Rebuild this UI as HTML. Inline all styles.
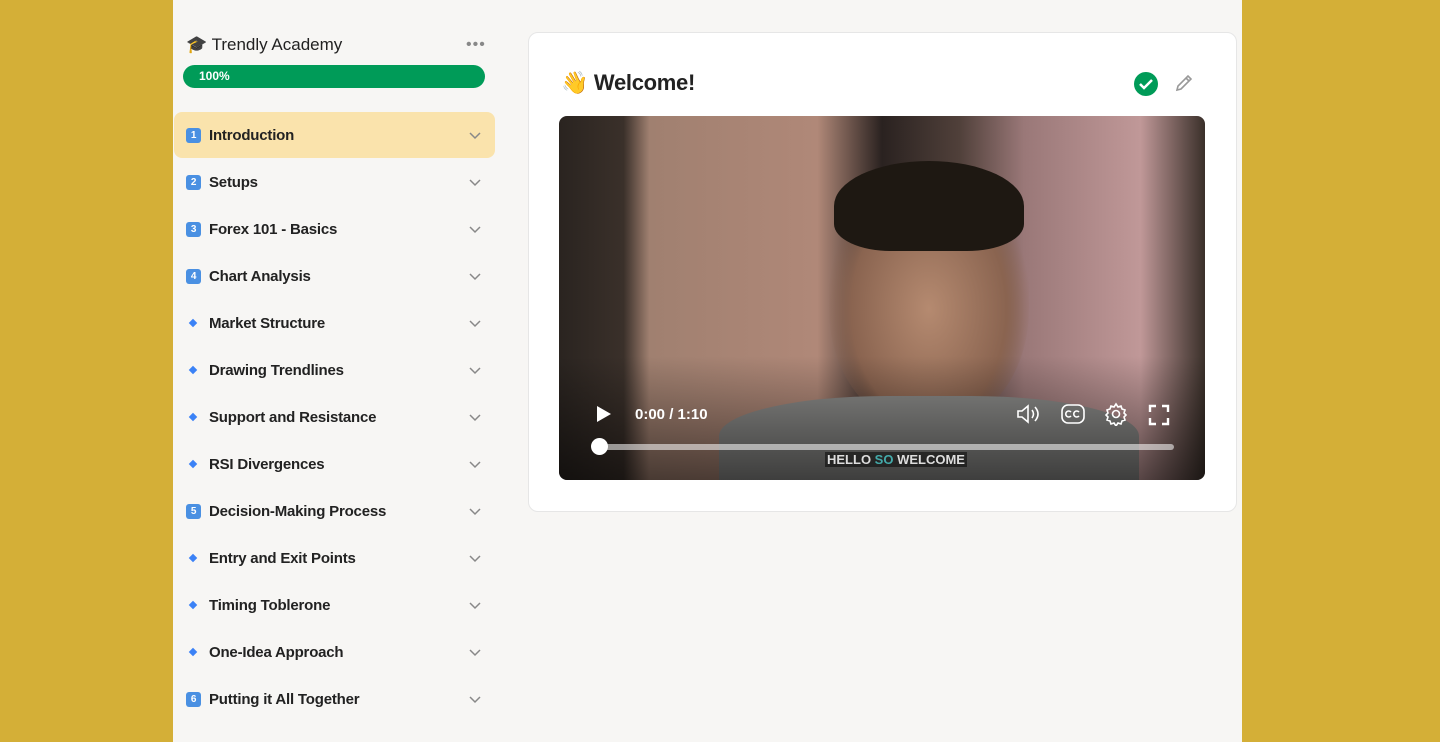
<!DOCTYPE html><html><head><style>
body{margin:0;width:1440px;height:742px;background:#d4af37;font-family:"Liberation Sans",sans-serif;position:relative;overflow:hidden}
.app{position:absolute;left:173px;top:0;width:1069px;height:742px;background:#f7f6f4}
.title{position:absolute;left:13px;top:35px;font-size:17px;color:#222;}
.dots{position:absolute;left:293px;top:36px;color:#888;font-size:16px;letter-spacing:1px}
.bar{position:absolute;left:10px;top:65px;width:302px;height:23px;background:#009b58;border-radius:12px;color:#fff;font-size:12px;font-weight:bold;line-height:22px;text-indent:16px}
.item{position:absolute;left:1px;width:321px;height:46px;border-radius:8px;font-size:15px;font-weight:bold;color:#222;line-height:48px;letter-spacing:-0.2px}
.item .ic{position:absolute;left:12px;top:16px;width:15px;height:15px;border-radius:3px;background:#4a90e2;color:#fff;font-size:10px;line-height:15px;text-align:center}
.item .dm{position:absolute;left:16px;top:20px;width:6px;height:6px;background:#3b82f6;transform:rotate(45deg)}
.item .t{position:absolute;left:35px}
.item svg{position:absolute;left:294px;top:18px}
.card{position:absolute;left:355px;top:32px;width:707px;height:478px;background:#fff;border:1px solid #e6e6e6;border-radius:10px}
.video{position:absolute;left:30px;top:83px;width:646px;height:364px;border-radius:8px;overflow:hidden;background:linear-gradient(90deg,#2a2420 0%,#3a302a 10%,#a08070 14%,#b08878 40%,#2a2220 50%,#50403a 62%,#9a7878 72%,#c09898 90%,#3a302a 100%)}
</style></head><body>
<div class="app">
<div class="title">🎓 Trendly Academy</div>
<div class="dots">•••</div>
<div class="bar">100%</div>
<div class="item" style="top:112px;background:#fae3ac"><span class="ic">1</span><span class="t">Introduction</span><svg width="14" height="10"><path d="M2 3l5 5 5-5" stroke="#888" stroke-width="1.5" fill="none"/></svg></div>
<div class="item" style="top:159px"><span class="ic">2</span><span class="t">Setups</span><svg width="14" height="10"><path d="M2 3l5 5 5-5" stroke="#888" stroke-width="1.5" fill="none"/></svg></div>
<div class="item" style="top:206px"><span class="ic">3</span><span class="t">Forex 101 - Basics</span><svg width="14" height="10"><path d="M2 3l5 5 5-5" stroke="#888" stroke-width="1.5" fill="none"/></svg></div>
<div class="item" style="top:253px"><span class="ic">4</span><span class="t">Chart Analysis</span><svg width="14" height="10"><path d="M2 3l5 5 5-5" stroke="#888" stroke-width="1.5" fill="none"/></svg></div>
<div class="item" style="top:300px"><span class="dm"></span><span class="t">Market Structure</span><svg width="14" height="10"><path d="M2 3l5 5 5-5" stroke="#888" stroke-width="1.5" fill="none"/></svg></div>
<div class="item" style="top:347px"><span class="dm"></span><span class="t">Drawing Trendlines</span><svg width="14" height="10"><path d="M2 3l5 5 5-5" stroke="#888" stroke-width="1.5" fill="none"/></svg></div>
<div class="item" style="top:394px"><span class="dm"></span><span class="t">Support and Resistance</span><svg width="14" height="10"><path d="M2 3l5 5 5-5" stroke="#888" stroke-width="1.5" fill="none"/></svg></div>
<div class="item" style="top:441px"><span class="dm"></span><span class="t">RSI Divergences</span><svg width="14" height="10"><path d="M2 3l5 5 5-5" stroke="#888" stroke-width="1.5" fill="none"/></svg></div>
<div class="item" style="top:488px"><span class="ic">5</span><span class="t">Decision-Making Process</span><svg width="14" height="10"><path d="M2 3l5 5 5-5" stroke="#888" stroke-width="1.5" fill="none"/></svg></div>
<div class="item" style="top:535px"><span class="dm"></span><span class="t">Entry and Exit Points</span><svg width="14" height="10"><path d="M2 3l5 5 5-5" stroke="#888" stroke-width="1.5" fill="none"/></svg></div>
<div class="item" style="top:582px"><span class="dm"></span><span class="t">Timing Toblerone</span><svg width="14" height="10"><path d="M2 3l5 5 5-5" stroke="#888" stroke-width="1.5" fill="none"/></svg></div>
<div class="item" style="top:629px"><span class="dm"></span><span class="t">One-Idea Approach</span><svg width="14" height="10"><path d="M2 3l5 5 5-5" stroke="#888" stroke-width="1.5" fill="none"/></svg></div>
<div class="item" style="top:676px"><span class="ic">6</span><span class="t">Putting it All Together</span><svg width="14" height="10"><path d="M2 3l5 5 5-5" stroke="#888" stroke-width="1.5" fill="none"/></svg></div>
<div class="card">
<div style="position:absolute;left:32px;top:37px;font-size:22px;font-weight:bold;color:#222;letter-spacing:-0.3px">👋 Welcome!</div>
<svg style="position:absolute;left:604px;top:38px" width="26" height="26"><circle cx="13" cy="13" r="12" fill="#009b58"/><path d="M7 13l4 4 8-8" stroke="#fff" stroke-width="2.5" fill="none"/></svg>
<svg style="position:absolute;left:644px;top:39px" width="22" height="22"><path d="M4 18l1-4 10-10 3 3-10 10z M13 6l3 3" stroke="#999" stroke-width="1.6" fill="none"/></svg>
<div class="video">
<div style="position:absolute;left:270px;top:50px;width:200px;height:260px;border-radius:45%;background:radial-gradient(ellipse at 50% 55%,#b58a70 0%,#8a6450 55%,transparent 72%)"></div>
<div style="position:absolute;left:275px;top:45px;width:190px;height:90px;border-radius:50% 50% 30% 30%;background:#1e1812"></div>
<div style="position:absolute;left:160px;top:280px;width:420px;height:100px;border-radius:40% 40% 0 0;background:#8a8a88"></div>
<div style="position:absolute;left:0;top:240px;width:646px;height:124px;background:linear-gradient(transparent,rgba(0,0,0,.55))"></div>
<svg style="position:absolute;left:37px;top:289px" width="16" height="18"><path d="M1 1l14 8-14 8z" fill="#fff"/></svg>
<div style="position:absolute;left:76px;top:290px;color:#fff;font-size:15px;font-weight:bold">0:00 / 1:10</div>
<svg style="position:absolute;left:457px;top:287px" width="26" height="22" fill="none" stroke="#fff" stroke-width="1.6"><path d="M2 8h4l6-5v16l-6-5H2z M16 7q3 4 0 8 M19 4q6 7 0 14"/></svg>
<svg style="position:absolute;left:501px;top:287px" width="26" height="22" fill="none" stroke="#fff" stroke-width="1.6"><rect x="2" y="2" width="22" height="18" rx="6"/><path d="M11 9a3 3 0 1 0 0 4 M19 9a3 3 0 1 0 0 4"/></svg>
<svg style="position:absolute;left:545px;top:286px" width="24" height="24" fill="none" stroke="#fff" stroke-width="1.6"><circle cx="12" cy="12" r="3.5"/><path d="M12 2l2 3 3-1 1 3 3 1-1 3 2 2-2 2 1 3-3 1-1 3-3-1-2 3-2-3-3 1-1-3-3-1 1-3-2-2 2-2-1-3 3-1 1-3 3 1z"/></svg>
<svg style="position:absolute;left:589px;top:288px" width="22" height="22" fill="none" stroke="#fff" stroke-width="2.4"><path d="M2 8V2h6 M14 2h6v6 M20 14v6h-6 M8 20H2v-6"/></svg>
<div style="position:absolute;left:38px;top:328px;width:577px;height:6px;border-radius:3px;background:rgba(255,255,255,.55)"></div>
<div style="position:absolute;left:32px;top:322px;width:17px;height:17px;border-radius:50%;background:#fff"></div>
<div style="position:absolute;left:266px;top:336px;font-size:13px;font-weight:bold;color:#ddd;background:rgba(0,0,0,.5);padding:0 2px">HELLO <span style="color:#4aa">SO</span> WELCOME</div>
</div></div></div>
</body></html>
